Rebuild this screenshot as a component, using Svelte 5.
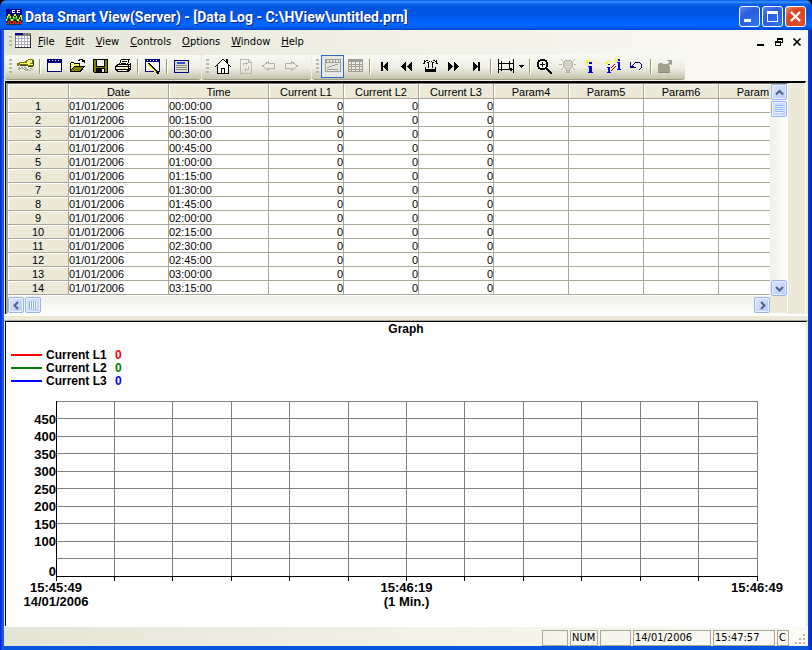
<script lang="ts">
  type Shape = { d: string; fill?: string; stroke?: string; w?: number };
  type Tool = { icon: string; label: string; active?: boolean; menu?: boolean; off?: boolean } | null;

  const G = '#a09f90';
  const N = '#000080';

  const icons: Record<string, Shape[]> = {
    key: [
      { d: 'M1 9h2v1h-2zM4 9h2v1h-2zM7 9h2v1h-2zM2 10h2v1h-2zM5 10h2v1h-2zM8 10h2v1h-2zM1 11h2v1h-2zM7 11h2v1h-2zM10 11h2v1h-2zM13 10h2v1h-2zM9 12h2v1h-2zM12 12h2v1h-2zM15 11h1v1h-1z', fill: '#a09f90' },
      { d: 'M9 2h2v-1h5v1h1v6h-1v1h-5v-1h-2v-1h-4v1h-2v-1h-1v1h-2v-3h2v-1h6z', fill: '#77771a' },
      { d: 'M10 3h1v-1h4v1h-2v3h3v1h-5v-1h-8v-1h7z', fill: '#ffff55' },
      { d: 'M13 3h2v2h-2z', fill: '#f4f3e8' },
      { d: 'M16 2h1v6h-1zM11 8h5v1h-5zM3 7h6v1h-6z', fill: '#3a3a20' }
    ],
    window: [
      { d: 'M1 1h15v13h-15z', fill: N },
      { d: 'M2 5h13v8h-13z', fill: '#f8f8ee' },
      { d: 'M3 2h1v1h-1zM6 2h1v1h-1zM9 2h1v1h-1zM12 2h1v1h-1z', fill: '#fff' }
    ],
    open: [
      { d: 'M1 14v-9h1v-1h3v1h6v3h5l-4 6z', fill: '#000' },
      { d: 'M2 5h3v1h5v2h-5l-3 4z', fill: '#ffff66' },
      { d: 'M5 9h9l-3 4h-9z', fill: '#808000' },
      { d: 'M9 2.500h1.500v-1h3v1h1.500v2M12.500 3.500h3', stroke: '#000' }
    ],
    save: [
      { d: 'M1 1h15v14h-14l-1-1z', fill: '#000' },
      { d: 'M2 2h2v7h9v-7h2v12h-2v-4h-9v4h-2z', fill: '#808000' },
      { d: 'M5 2h7v6h-7zM10 11h2v3h-2z', fill: '#f4f3e8' }
    ],
    print: [
      { d: 'M5 1h9l-2 5h-8z', fill: '#f8f8ee' },
      { d: 'M4.500 6l2-5h8l-2 5M7 3.500h5M6 5.500h5', stroke: '#000' },
      { d: 'M3 6h11l2-1v6l-3 3h-11l-2-3v-3z', fill: '#000' },
      { d: 'M3 7h10v1h-11zM1 9h12v2h-12zM3 12h9v1h-9z', fill: '#f4f3e8' },
      { d: 'M8 10h3v1h-3z', fill: '#d8d800' },
      { d: 'M14 7h1v1h-1zM14 9h1v1h-1z', fill: '#fff' }
    ],
    edit: [
      { d: 'M1 1h15v13h-15z', fill: N },
      { d: 'M2 4h13v9h-13z', fill: '#f8f8ee' },
      { d: 'M3 2h1v1h-1zM6 2h1v1h-1zM9 2h1v1h-1zM12 2h1v1h-1z', fill: '#fff' },
      { d: 'M4 5h2v1h1v1h1v1h1v1h1v1h1v1h1v1h1v1h1v1h1v2h-2v-1h-1v-1h-1v-1h-1v-1h-1v-1h-1v-1h-1v-1h-1v-1h-1v-1h-1z', fill: '#000' },
      { d: 'M4 6h1v1h1v1h1v1h1v1h1v1h1v1h1v1h1v1h-2v-1h-1v-1h-1v-1h-1v-1h-1v-1h-1v-1h-1z', fill: '#ffff30' }
    ],
    list: [
      { d: 'M1 2h15v13h-15z', fill: N },
      { d: 'M2 3h13v11h-13z', fill: '#deddce' },
      { d: 'M4 4h8v2h-8z', fill: '#3050e0' },
      { d: 'M3 7.500h11M3 9.500h11M3 11.500h11', stroke: '#888' }
    ],
    home: [
      { d: 'M3 8l6-6 6 6v7h-12z', fill: '#fff' },
      { d: 'M1 9l8-8 8 8M3.500 7v8.500h11v-8.500M12.500 1v4M13.500 1v4M7.500 15v-5h3v5', stroke: '#000' }
    ],
    refresh: [
      { d: 'M3.500 1.500h8l3 3v11h-11zM11.500 1.500v3h3M6.500 8v-2.500h4M9.500 4v3M11.500 8v3.500h-4M8.500 10v3', stroke: '#bbb9aa' }
    ],
    back: [{ d: 'M8.500 3.500v2h6v5h-6v2l-6-4.500z', stroke: '#b4b3a4' }],
    forward: [{ d: 'M8.500 3.500v2h-6v5h6v2l6-4.500z', stroke: '#b4b3a4' }],
    chart: [
      { d: 'M1.500 1.500h15v12h-15zM1 4.500h15M3 11.500h11M3 9.500h2M5 8.500h3M8 7.500h3M11 6.500h3', stroke: G },
      { d: 'M2 2h1v2h-1zM5 2h1v2h-1zM8 2h1v2h-1zM11 2h1v2h-1zM14 2h1v2h-1z', fill: G }
    ],
    table: [
      { d: 'M1 1h15v3h-15z', fill: G },
      { d: 'M1.500 1.500h14v12h-14zM1 6.500h15M1 8.500h15M1 11.500h15M4.500 4v10M8.500 4v10M12.500 4v10', stroke: G }
    ],
    first: [{ d: 'M5 4h2v9h-2zM7 8h1v-1h1v-1h1v-1h1v-1h1v9h-1v-1h-1v-1h-1v-1h-1v-1h-1z', fill: '#000' }],
    rewind: [{ d: 'M2 8.500l5-4.500v9zM8 8.500l5-4.500v9z', fill: '#000' }],
    middle: [
      { d: 'M2 3.500h2M1 5.500h1M4 2.500h2M5 4.500h1M6.500 4v6M10.500 4v6M7 3.500h1M9 3.500h1M11 2.500h2M11 4.500h1M13 3.500h2M15 5.500h1M2.500 2v4M14.500 2v4M3.500 9v4M13.500 9v4', stroke: '#000' },
      { d: 'M3 11h11v3h-11z', fill: '#000' }
    ],
    ffwd: [{ d: 'M3 4l5 4.500-5 4.500zM9 4l5 4.500-5 4.500z', fill: '#000' }],
    last: [{ d: 'M10 4h2v9h-2zM10 8h-1v-1h-1v-1h-1v-1h-1v-1h-1v9h1v-1h1v-1h1v-1h1v-1h1z', fill: '#000' }],
    range: [
      { d: 'M1.500 1v14M16.500 1v14M4.500 3v9M12.500 3v9M2 5.500h14M2 11.500h14', stroke: '#000' },
      { d: 'M2 11.500l3-2v4zM16 11.500l-3-2v4z', fill: '#000' }
    ],
    zoom: [
      { d: 'M4 1h5v1h2v2h1v5h-1v2h-2v1h-5v-1h-2v-2h-1v-5h1v-2h2z', fill: '#000' },
      { d: 'M4 3h5v1h1v5h-1v1h-5v-1h-1v-5h1z', fill: '#f8f8f2' },
      { d: 'M4 6h5v1h-5zM6 4h1v5h-1z', fill: '#000' },
      { d: 'M10 10h2v1h1v1h1v1h1v1h1v2h-2v-1h-1v-1h-1v-1h-1v-1h-1z', fill: '#000' }
    ],
    bulb: [
      { d: 'M6 2h6l2 3v3l-3 3v4h-4v-4l-3-3v-3z', fill: '#d2d1c6' },
      { d: 'M6.500 2.500h5l2 2v4l-3 3v3h-3v-3l-3-3v-4zM7 12.500h4M2 1l2 2M16 1l-2 2M0 6.500h3M15 6.500h2M2 12l2-2M16 12l-2-2', stroke: '#acab9c' }
    ],
    info: [
      { d: 'M7 1h1v2h-1zM4 2h1v1h-1zM5 3h1v1h-1zM10 2h1v1h-1zM9 3h1v1h-1zM3 4h3v1h-3zM5 5h1v1h-1zM4 6h1v1h-1z', fill: '#f4f400' },
      { d: 'M7 4h3v2h-3zM6 8h4v6h1v1h-5v-1h1v-5h-1z', fill: '#0000f0' }
    ],
    compare: [
      { d: 'M3 2h1v2h-1zM1 3h1v1h-1zM2 4h1v1h-1zM5 3h1v1h-1zM0 5h3v1h-3zM2 6h1v1h-1zM12 0h1v2h-1zM10 0h1v1h-1zM9 2h3v1h-3zM11 3h1v1h-1zM10 4h1v1h-1z', fill: '#f4f400' },
      { d: 'M3 6h2v1h-2zM2 9h3v5h1v1h-4v-1h1v-4h-1zM13 1h2v2h-2zM12 4h3v7h1v1h-4v-1h1v-6h-1z', fill: '#0000f0' },
      { d: 'M6 10l4-4M6 13l5-5', stroke: '#a00000' }
    ],
    undo: [{ d: 'M2.500 4v6M2 9.500h6M3 8.500h3M4 7.500h1M5 6.500h1M6 5.500h1M7 4.500h5M12 5.500h1M13.500 6v4M12 10.500h1M11 11.500h1', stroke: N }],
    export: [
      { d: 'M1 15v-9h1v-1h4v1h5v2h2v7z', fill: G },
      { d: 'M9 9l5-5', stroke: G, w: 2 },
      { d: 'M10 2h5v5h-1v-2h-1v-1h-1v-1h-2z', fill: G },
      { d: 'M2 14.500h10', stroke: '#8d8c7e' }
    ]
  };

  const bands: Tool[][] = [
    [
      { icon: 'key', label: 'Login' },
      null,
      { icon: 'window', label: 'New' },
      { icon: 'open', label: 'Open' },
      { icon: 'save', label: 'Save' },
      { icon: 'print', label: 'Print' },
      null,
      { icon: 'edit', label: 'Setup' },
      null,
      { icon: 'list', label: 'Properties' }
    ],
    [
      { icon: 'home', label: 'Home' },
      { icon: 'refresh', label: 'Refresh', off: true },
      { icon: 'back', label: 'Back', off: true },
      { icon: 'forward', label: 'Forward', off: true }
    ],
    [
      { icon: 'chart', label: 'Graph', active: true },
      { icon: 'table', label: 'Table', off: true },
      null,
      { icon: 'first', label: 'First' },
      { icon: 'rewind', label: 'Rewind' },
      { icon: 'middle', label: 'Go to' },
      { icon: 'ffwd', label: 'Fast forward' },
      { icon: 'last', label: 'Last' },
      null,
      { icon: 'range', label: 'Range', menu: true },
      null,
      { icon: 'zoom', label: 'Zoom in' },
      { icon: 'bulb', label: 'Hint', off: true },
      { icon: 'info', label: 'Info' },
      { icon: 'compare', label: 'Compare' },
      { icon: 'undo', label: 'Undo' },
      null,
      { icon: 'export', label: 'Export', off: true }
    ]
  ];

  const menus = ['File', 'Edit', 'View', 'Controls', 'Options', 'Window', 'Help'];
  const columns = ['Date', 'Time', 'Current L1', 'Current L2', 'Current L3', 'Param4', 'Param5', 'Param6', 'Param7'];

  const pad = (n: number) => String(n).padStart(2, '0');
  const rows = Array.from({ length: 14 }, (_, i) => ({
    n: i + 1,
    date: '01/01/2006',
    time: `${pad(Math.floor(i / 4))}:${pad((i % 4) * 15)}:00`
  }));

  const series = [
    { name: 'Current L1', value: 0, color: '#ff0000' },
    { name: 'Current L2', value: 0, color: '#008000' },
    { name: 'Current L3', value: 0, color: '#0000ff' }
  ];

  const hLines = Array.from({ length: 10 }, (_, i) => i * 10);
  const vLines = Array.from({ length: 13 }, (_, i) => (i * 100) / 12);
  const yLabels = [450, 400, 350, 300, 250, 200, 150, 100];
</script>

<div class="window">
  <header class="titlebar">
    <svg class="logo" viewBox="0 0 16 16" shape-rendering="crispEdges" aria-hidden="true">
      <path d="M0 0h16v16h-16z" fill="#000090" />
      <path d="M0 6h16v10h-16z" fill="#103050" />
      <path d="M6 1.500h3M6.500 1v2M6 3.500h3M11.500 1v3M12 1.500h2M12 3.500h2" stroke="#fff" fill="none" />
      <path d="M0 12l3-7 3 7 3-7 3 7 3-6 1 5" stroke="#e8f000" fill="none" />
      <path d="M1 11l2-4 2 4M7 11l2-3 2 3" stroke="#20c020" fill="none" />
      <path d="M0 14.500h2v-2h2v2h3v-2h2v2h3v-2h2v2h2" stroke="#f02000" fill="none" />
    </svg>
    <h1>Data Smart View(Server) - [Data Log - C:\HView\untitled.prn]</h1>
    <button class="cap" aria-label="Minimize">
      <svg viewBox="0 0 19 19"><path d="M4 12h7v3h-7z" fill="#fff" /></svg>
    </button>
    <button class="cap" aria-label="Maximize">
      <svg viewBox="0 0 19 19" shape-rendering="crispEdges"><path d="M4 4h11v11h-11zM5 7v7h9v-7z" fill="#fff" fill-rule="evenodd" /></svg>
    </button>
    <button class="cap close" aria-label="Close">
      <svg viewBox="0 0 19 19"><path d="M5 5l9 9M14 5l-9 9" stroke="#fff" stroke-width="2.400" /></svg>
    </button>
  </header>

  <div class="body">
    <nav class="menubar">
      <span class="grip"></span>
      <svg class="doc" viewBox="0 0 16 15" shape-rendering="crispEdges" aria-hidden="true">
        <path d="M0 0h16v15h-16z" fill="#808080" />
        <path d="M1 3h14v11h-14z" fill="#fff" />
        <path d="M0 0h8v2h-8z" fill="#000080" />
        <path d="M3.500 3v11M6.500 3v11M9.500 3v11M12.500 3v11M1 5.500h14M1 8.500h14M1 11.500h14" stroke="#b0b0b8" />
        <path d="M0 14.500h16M15.500 2v13" stroke="#303030" />
      </svg>
      <div class="menus">
        {#each menus as m}
          <button class="menu"><u>{m[0]}</u>{m.slice(1)}</button>
        {/each}
      </div>
      <div class="mdi">
        <button aria-label="Minimize document"><svg viewBox="0 0 10 10" shape-rendering="crispEdges"><path d="M1 7h7v2h-7z" /></svg></button>
        <button aria-label="Restore document">
          <svg viewBox="0 0 10 10" shape-rendering="crispEdges"><path d="M3 1h6v5h-2v3h-6v-5h2zM4 3v1h3v1h1v-2zM2 6v2h4v-2z" fill-rule="evenodd" /></svg>
        </button>
        <button aria-label="Close document"><svg viewBox="0 0 10 10"><path d="M1.500 1.500l7 7M8.500 1.500l-7 7" stroke="#000" stroke-width="1.700" /></svg></button>
      </div>
    </nav>

    <div class="toolbars">
      {#each bands as band}
        <div class="band">
          <span class="grip"></span>
          {#each band as tool}
            {#if tool}
              <button class="tool" class:active={tool.active} disabled={tool.off} aria-label={tool.label}>
                <svg viewBox="0 0 17 17" shape-rendering="crispEdges">
                  {#each icons[tool.icon] as s}
                    <path d={s.d} fill={s.fill ?? 'none'} stroke={s.stroke ?? 'none'} stroke-width={s.w ?? 1} />
                  {/each}
                </svg>
              </button>
              {#if tool.menu}
                <button class="drop" aria-label="Range options">
                  <svg viewBox="0 0 5 3" shape-rendering="crispEdges"><path d="M0 0h5l-2.500 3z" /></svg>
                </button>
              {/if}
            {:else}
              <span class="sep"></span>
            {/if}
          {/each}
        </div>
      {/each}
    </div>

    <section class="pane data">
      <div class="frame">
        <div class="sheet">
          <table>
            <colgroup>
              <col class="c-num" /><col class="c-wide" /><col class="c-wide" />
              {#each columns.slice(2) as _}<col class="c-val" />{/each}
            </colgroup>
            <thead>
              <tr>
                <th></th>
                {#each columns as c}<th scope="col">{c}</th>{/each}
              </tr>
            </thead>
            <tbody>
              {#each rows as r}
                <tr>
                  <th scope="row">{r.n}</th>
                  <td>{r.date}</td>
                  <td>{r.time}</td>
                  <td class="num">0</td>
                  <td class="num">0</td>
                  <td class="num">0</td>
                  <td></td><td></td><td></td><td></td>
                </tr>
              {/each}
            </tbody>
          </table>
        </div>
        <div class="vscroll">
          <button class="sb" aria-label="Scroll up"><svg viewBox="0 0 9 9"><path d="M1 6.500l3.500-3.500 3.500 3.500" /></svg></button>
          <span class="thumb"></span>
          <button class="sb end" aria-label="Scroll down"><svg viewBox="0 0 9 9"><path d="M1 3l3.500 3.500 3.500-3.500" /></svg></button>
        </div>
        <div class="hscroll">
          <button class="sb" aria-label="Scroll left"><svg viewBox="0 0 9 9"><path d="M6 1l-3.500 3.500 3.500 3.500" /></svg></button>
          <span class="thumb"></span>
          <button class="sb end" aria-label="Scroll right"><svg viewBox="0 0 9 9"><path d="M3 1l3.500 3.500-3.500 3.500" /></svg></button>
        </div>
      </div>
    </section>

    <div class="splitter"></div>

    <section class="pane graph">
      <h2>Graph</h2>
      <ul class="legend">
        {#each series as s}
          <li>
            <svg width="32" height="13" shape-rendering="crispEdges" aria-hidden="true"><path d="M1 6h31" stroke={s.color} stroke-width="2" /></svg>
            <span class="name">{s.name}</span>
            <span style="color: {s.color}">{s.value}</span>
          </li>
        {/each}
      </ul>
      <svg class="plot" role="img" aria-label="Graph">
        <g class="lines">
          {#each hLines as y}<line x1="0" x2="100%" y1="{y}%" y2="{y}%" />{/each}
          {#each vLines as x}<line x1="{x}%" x2="{x}%" y1="0" y2="100%" />{/each}
        </g>
        <g class="axis">
          <line x1="0" x2="0" y1="0" y2="100%" />
          <line x1="0" x2="100%" y1="100%" y2="100%" />
          <!-- ticks hang below the time axis -->
          <g class="ticks">
            {#each vLines as x}<line x1="{x}%" x2="{x}%" y1="100%" y2="103%" />{/each}
          </g>
        </g>
        {#each yLabels as v, i}
          <text x="0" y="{(i + 1) * 10}%" dy="5" text-anchor="end">{v}</text>
        {/each}
        <text x="0" y="100%" dy="0" text-anchor="end">0</text>
        <g text-anchor="middle">
          <text x="0" y="100%" dy="16">15:45:49</text>
          <text x="0" y="100%" dy="30">14/01/2006</text>
          <text x="50%" y="100%" dy="16">15:46:19</text>
          <text x="50%" y="100%" dy="30">(1 Min.)</text>
          <text x="100%" y="100%" dy="16">15:46:49</text>
        </g>
      </svg>
    </section>

    <footer class="status">
      <span class="cell w-ind"></span>
      <span class="cell w-num">NUM</span>
      <span class="cell w-gap"></span>
      <span class="cell w-date">14/01/2006</span>
      <span class="cell w-time">15:47:57</span>
      <span class="cell w-c">C</span>
      <svg class="sizer" viewBox="0 0 12 12" shape-rendering="crispEdges" aria-hidden="true">
        <path d="M8 0h2v2h-2zM4 4h2v2h-2zM8 4h2v2h-2zM0 8h2v2h-2zM4 8h2v2h-2zM8 8h2v2h-2z" fill="#b8b4a2" />
      </svg>
    </footer>
  </div>
</div>

<style>
  :global(body) { margin: 0; background: #000; }
  * { box-sizing: border-box; }
  button { font: inherit; color: inherit; padding: 0; margin: 0; border: none; background: none; }
  svg { display: block; }

  .window {
    min-height: 100vh;
    display: flex;
    flex-direction: column;
    padding: 0 4px 4px;
    background: linear-gradient(90deg, #0019cf 0, #0831d9 1px, #166aee 3px, #0855dd 4px, #0855dd calc(100% - 4px), #0040e8 calc(100% - 3px), #001ea0 100%);
    border-radius: 7px 7px 0 0;
    overflow: hidden;
    font-family: "DejaVu Sans Condensed", Tahoma, "DejaVu Sans", sans-serif;
    font-size: 11px;
    color: #000;
  }

  .titlebar {
    display: flex;
    align-items: center;
    gap: 2px;
    height: 30px;
    margin: 0 -4px;
    padding: 3px 6px 0 6px;
    background: linear-gradient(#0058e8 0, #3a93ff 2px, #0a60e8 4px, #0055e0 8px, #0054e3 14px, #0062fb 20px, #0068ff 25px, #0058e8 28px, #0041c8 100%);
  }
  .logo { width: 16px; height: 16px; }
  h1 {
    flex: 1;
    margin: 0 0 0 1px;
    font: bold 14px/18px Roboto, "Noto Sans", sans-serif;
    color: #fff;
    text-shadow: 1px 1px 0 #0a1e80;
    white-space: nowrap;
    overflow: hidden;
  }
  .cap {
    width: 21px; height: 21px;
    border: 1px solid #fff;
    border-radius: 3px;
    background: radial-gradient(circle at 80% 85%, #2f74f0, #2a5cdc 60%, #5e8cf0);
  }
  .cap svg { width: 19px; height: 19px; }
  .cap.close { background: radial-gradient(circle at 75% 80%, #e0502c, #d8451f 60%, #ee8f74); }

  .body {
    flex: 1;
    display: flex;
    flex-direction: column;
    background: #ece9d8;
  }

  .menubar, .toolbars { background: linear-gradient(90deg, #e5e5d7, #f3f2e7 55%, #fbfaf5); }
  .menubar { display: flex; align-items: center; height: 23px; padding-left: 5px; }
  .grip {
    width: 3px; height: 12px;
    background: repeating-linear-gradient(#b9b8a4 0 2px, transparent 2px 4px);
  }
  .doc { width: 16px; height: 15px; margin: 0 2px 2px 3px; }
  .menus { display: flex; gap: 1px; }
  .menu { padding: 0 5px; line-height: 20px; }
  .mdi { margin-left: auto; display: flex; gap: 8px; padding-right: 6px; }
  .mdi svg { width: 10px; height: 10px; }

  .toolbars { display: flex; gap: 1px; height: 28px; padding: 2px 0 1px 1px; }
  .band {
    display: flex;
    align-items: center;
    height: 25px;
    padding: 0 8px 1px 4px;
    border-bottom: 1px solid #9a9a80;
    border-radius: 3px;
    background: linear-gradient(#fafaf6, #ecece2 55%, #c4c3ae);
  }
  .band .grip { height: 16px; margin-right: 2px; }
  .tool { width: 23px; height: 23px; padding: 3px; }
  .tool svg { width: 17px; height: 17px; }
  .tool.active { padding: 2px; border: 1px solid #316ac5; background: #e6e8e6; }
  .drop { width: 10px; height: 23px; padding: 0 0 0 2px; }
  .drop svg { width: 5px; height: 3px; }
  .sep { width: 2px; height: 15px; margin: 0 2px; border-left: 1px solid #9c9a68; border-right: 1px solid #fff; }

  .pane { border-top: 1px solid #000; border-left: 1px solid #000; margin-left: 1px; }
  .data { border-top-width: 2px; margin-right: 2px; border-right: 1px solid #fff; padding-right: 17px; }
  .frame {
    display: grid;
    grid-template-columns: minmax(0, 1fr) 17px;
    border: 1px solid #fff;
    border-top-color: #716f64;
    border-left: 2px solid #aca899;
    background: #ece9d8;
  }
  .sheet { overflow: hidden; height: 212px; background: #fff; }
  table {
    table-layout: fixed;
    width: 786px;
    border-collapse: separate;
    border-spacing: 0;
    font: 11px/12px "Liberation Sans", Arial, sans-serif;
  }
  .c-num { width: 61px; }
  .c-wide { width: 100px; }
  .c-val { width: 75px; }
  th, td { height: 14px; padding: 0; border-right: 1px solid #aca899; border-bottom: 1px solid #aca899; white-space: nowrap; line-height: 12px; }
  thead th { height: 15px; padding-top: 2px; }
  th { background: #ece9d8; font-weight: normal; text-align: center; box-shadow: inset 1px 1px 0 #fff; }
  td { background: #fff; text-align: left; }
  td.num { text-align: right; }

  .vscroll { display: flex; flex-direction: column; padding-left: 1px; background: linear-gradient(90deg, #f0efe8, #fefefb); }
  .hscroll { display: flex; padding-top: 1px; background: linear-gradient(#f0efe8, #fefefb); }
  .sb, .thumb {
    display: grid;
    place-items: center;
    width: 16px; height: 16px;
    border: 1px solid #98b4ee;
    border-radius: 2px;
    background: linear-gradient(135deg, #dce6fe, #b6cafa);
    box-shadow: inset 0 0 0 1px #e8effe;
  }
  .sb svg { width: 9px; height: 9px; fill: none; stroke: #4d6185; stroke-width: 2; }
  .sb.end { margin: auto 0 0 0; }
  .hscroll .sb.end { margin: 0 0 0 auto; }
  .thumb { margin: 1px 0; }
  .hscroll .thumb { margin: 0 1px; }
  .thumb::after { content: ""; width: 8px; height: 8px; background: repeating-linear-gradient(#8cb0f8 0 1px, #eef4fe 1px 2px); }
  .hscroll .thumb::after { background: repeating-linear-gradient(90deg, #8cb0f8 0 1px, #eef4fe 1px 2px); }

  .splitter { height: 7px; border-top: 2px solid #fff; border-bottom: 1px solid #aca899; background: #ece9d8; }

  .graph {
    flex: 1;
    display: flex;
    flex-direction: column;
    margin-right: 1px;
    border-right: 1px solid #ece9d8;
    background: #fff;
    font: bold 12px/13px "Liberation Sans", Arial, sans-serif;
  }
  h2 { margin: 1px 0 0; font: inherit; text-align: center; }
  .legend { list-style: none; margin: 13px 0; padding: 0 0 0 4px; }
  .legend li { display: flex; gap: 4px; }
  .name { width: 65px; }
  .plot { flex: 1; min-height: 120px; width: auto; margin: 0 49px 50px 50px; overflow: visible; font-size: 13px; }
  .lines line { stroke: #808080; shape-rendering: crispEdges; }
  .axis line { stroke: #000; shape-rendering: crispEdges; }

  .status {
    display: flex;
    align-items: flex-end;
    gap: 2px;
    height: 20px;
    padding: 0 1px 0 0;
    border-top: 1px solid #fff;
    background: linear-gradient(90deg, #e5e5d7, #f3f2e7 55%, #fbfaf5);
  }
  .cell { height: 16px; border: 1px solid #aca899; padding-left: 1px; line-height: 14px; white-space: nowrap; overflow: hidden; }
  .w-ind { width: 26px; margin-left: auto; }
  .w-num { width: 28px; }
  .w-gap { width: 31px; }
  .w-date { width: 78px; }
  .w-time { width: 62px; }
  .w-c { width: 12px; }
  .sizer { width: 12px; height: 12px; margin-left: 4px; }
</style>
